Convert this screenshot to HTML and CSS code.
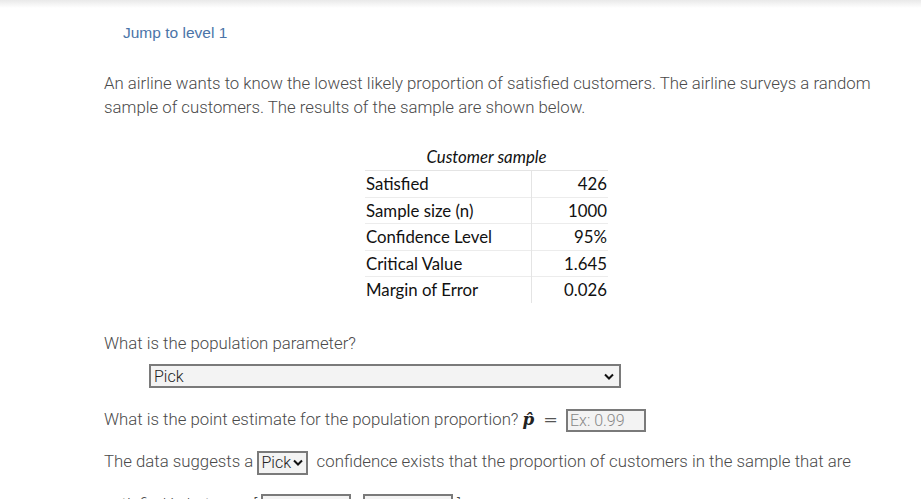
FILE: index.html
```html
<!DOCTYPE html>
<html lang="en">
<head>
    <meta charset="UTF-8">
    <meta name="viewport" content="width=device-width, initial-scale=1.0">
    <title>Confidence Interval</title>
    <link rel="stylesheet" href="styles.css">
</head>
<body>
    <div class="topbar"></div>

    <div class="page">
        <a class="jump" href="#">Jump to level 1</a>

        <p class="intro">An airline wants to know the lowest likely proportion of satisfied customers. The airline surveys a random sample of customers. The results of the sample are shown below.</p>

        <div class="sample">
            <div class="sample-title">Customer sample</div>
            <table class="sample-table">
                <tr><td>Satisfied</td><td class="num">426</td></tr>
                <tr><td>Sample size (n)</td><td class="num">1000</td></tr>
                <tr><td>Confidence Level</td><td class="num">95%</td></tr>
                <tr><td>Critical Value</td><td class="num">1.645</td></tr>
                <tr><td>Margin of Error</td><td class="num">0.026</td></tr>
            </table>
        </div>

        <div class="question">
            <div class="q-text">What is the population parameter?</div>
            <select class="pick wide">
                <option>Pick</option>
            </select>
        </div>

        <div class="question inline estimate">
            What is the point estimate for the population proportion?
            <span class="math"><span class="phat">p&#770;</span><span class="eq">=</span></span><input class="answer" type="text" placeholder="Ex: 0.99">
        </div>

        <div class="question inline">
            The data suggests a
            <select class="pick small">
                <option>Pick</option>
            </select>
            &nbsp;confidence exists that the proportion of customers in the sample that are
        </div>

        <div class="question inline">
            satisfied is between [ <input class="answer range" type="text"> , <input class="answer range" type="text"> ]
        </div>
    </div>
</body>
</html>
```

FILE: styles.css
```css
body {
    margin: 0;
    font-family: Roboto, "Liberation Sans", sans-serif;
    font-weight: 300;
    color: #4a4a4a;
    background: #fff;
}

.topbar {
    height: 8px;
    background: linear-gradient(#e9e9e9, #fff);
}

.page {
    padding: 0 30px 0 104px;
}

.jump {
    display: inline-block;
    margin: 16px 0 0 19px;
    font-family: "Liberation Sans", Arial, sans-serif;
    font-weight: 400;
    font-size: 15.5px;
    color: #4b74a8;
    text-decoration: none;
}

.intro {
    margin: 29px 0 0;
    font-size: 16.8px;
    line-height: 24px;
}

.sample {
    width: 243px;
    margin: 25px 0 0 261px;
    font-family: Lato, "Open Sans", sans-serif;
    font-weight: 400;
    font-size: 16.8px;
    color: #111;
}

.sample-title {
    text-align: center;
    font-style: italic;
    line-height: 26px;
}

.sample-table {
    width: 100%;
    border-collapse: collapse;
}

.sample-table td {
    height: 25.5px;
    padding: 0 1px;
    border-top: 1px solid #ececec;
}

.sample-table tr:first-child td {
    border-top-color: #e4e4e4;
}

.sample-table .num {
    width: 74px;
    text-align: right;
    border-left: 1px solid #e4e4e4;
}

.question {
    margin-top: 28px;
    font-size: 16.8px;
    line-height: 24px;
}

.q-text {
    margin-bottom: 9px;
}

/* native arrow is too wide for the small picker, so draw our own */
.pick {
    appearance: none;
    -webkit-appearance: none;
    font-family: Roboto, "Liberation Sans", sans-serif;
    font-weight: 300;
    font-size: 16px;
    color: #222;
    background-color: #f3f3f3;
    background-image: url("data:image/svg+xml,%3Csvg xmlns='http://www.w3.org/2000/svg' width='10' height='7' viewBox='0 0 10 7'%3E%3Cpath d='M1 1.5l4 4 4-4' fill='none' stroke='%23111' stroke-width='2'/%3E%3C/svg%3E");
    background-repeat: no-repeat;
    background-position: right 3px center;
    border: 2px solid #7a7a7a;
    border-radius: 0;
    height: 24px;
    padding: 0 14px 0 3px;
}

.pick.wide {
    width: 472px;
    margin-left: 45px;
    background-position: right 5px center;
}

.pick.small {
    width: 51px;
    padding: 0 12px 0 2px;
    vertical-align: middle;
}

.inline {
    margin-top: 17px;
}

.estimate {
    margin-top: 19px;
}

.math {
    font-family: "DejaVu Serif", "Liberation Serif", serif;
    font-weight: 400;
    color: #222;
    margin: 0 8px 0 0;
}

.phat {
    font-style: italic;
    font-weight: bold;
}

.eq {
    margin-left: 9px;
    font-size: 17.5px;
    color: #555;
}

.answer {
    width: 72px;
    height: 19px;
    padding: 0 2px;
    font-family: Roboto, "Liberation Sans", sans-serif;
    font-weight: 300;
    font-size: 16px;
    color: #222;
    background: #f3f3f3;
    border: 2px solid #7a7a7a;
    border-radius: 0;
    vertical-align: middle;
}

.answer::placeholder {
    color: #888;
}

.range {
    width: 82px;
}
```
